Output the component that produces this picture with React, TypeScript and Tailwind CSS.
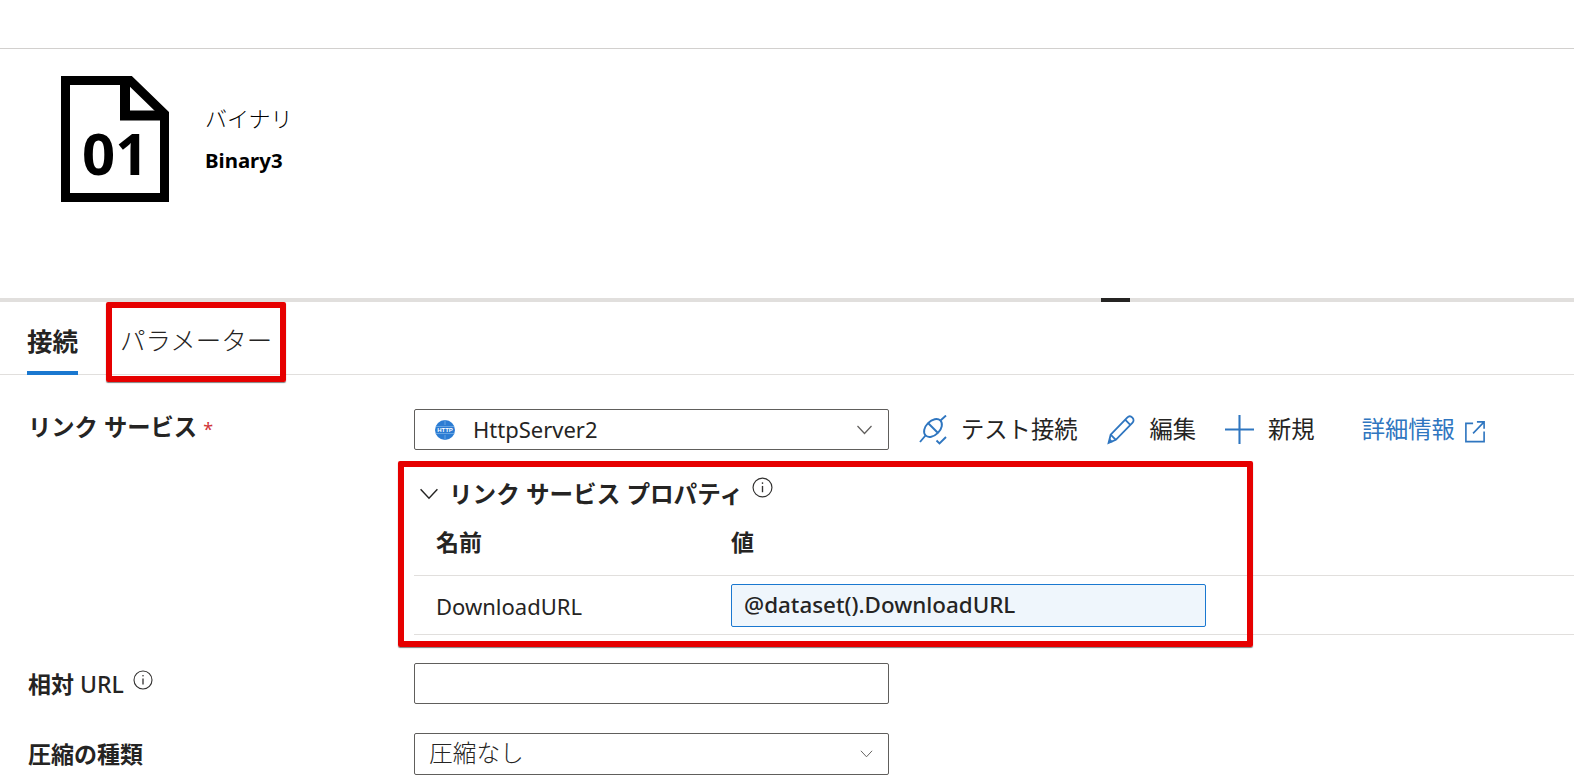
const font = "font-['Noto_Sans','Noto_Sans_CJK_JP',sans-serif]";

function Chevron({ className }: { className: string }) {
  return (
    <svg viewBox="0 0 16 10" fill="none" stroke="currentColor" strokeWidth="1.2" className={className}>
      <path d="M1 1l7 7.5L15 1" />
    </svg>
  );
}

function InfoIcon({ className }: { className: string }) {
  return (
    <svg viewBox="0 0 20 20" fill="none" stroke="#323130" strokeWidth="1.1" className={className}>
      <circle cx="10" cy="10" r="9" />
      <path d="M10 8.500v6" strokeWidth="1.3" />
      <circle cx="10" cy="5.800" r="0.8" fill="#323130" stroke="none" />
    </svg>
  );
}

function FileIcon() {
  return (
    <svg viewBox="0 0 108 126" className="w-[108px] h-[126px] shrink-0">
      <path d="M4.500 4.500H69L103.500 38V121.500H4.500Z" fill="none" stroke="#000" strokeWidth="9" />
      <path d="M64 5V39.500H104" fill="none" stroke="#000" strokeWidth="10" />
      <text x="21" y="99" fontSize="58" fontWeight="700" fill="#000" fontFamily="'Open Sans',sans-serif">01</text>
    </svg>
  );
}

function HttpIcon() {
  return (
    <svg viewBox="0 0 20 20" className="w-5 h-5 shrink-0">
      <circle cx="10" cy="10" r="10" fill="#2b7cd3" />
      <path d="M1 6.500h18M1 13.500h18M10 0v5M10 15v5" stroke="#8fc0ee" strokeWidth="0.6" />
      <text x="10" y="12" textAnchor="middle" fontSize="6" fontWeight="700" fill="#fff" fontFamily="'Liberation Sans',sans-serif">HTTP</text>
    </svg>
  );
}

function PlugIcon() {
  return (
    <svg viewBox="0 0 30 30" fill="none" stroke="#2f76c0" strokeWidth="1.900" className="w-[30px] h-[30px] shrink-0">
      <ellipse cx="15" cy="13" rx="10.500" ry="7" transform="rotate(-45 15 13)" />
      <path d="M10 8l10 10" />
      <path d="M2 27l5.500-6.500M22.500 5.500L28 0.500" />
      <path d="M18.500 25.500l3 3 6.500-6.500" />
    </svg>
  );
}

function PencilIcon() {
  return (
    <svg viewBox="0 0 28 30" fill="none" stroke="#2f76c0" strokeWidth="1.800" className="w-[30px] h-[31px] shrink-0">
      <path d="M2 28l2-8L20 3.500c1.500-1.500 3.500-1.500 5 0s1.500 3.500 0 5L9 25z" />
      <path d="M4 20l5 5M18 5.500l5 5" />
      <path d="M2 28l1-4.500 3.500 3.500z" fill="#2f76c0" stroke="none" />
    </svg>
  );
}

function ExternalIcon() {
  return (
    <svg viewBox="0 0 22 24" fill="none" stroke="#2f76c0" strokeWidth="1.700" className="w-[22px] h-[23px] shrink-0">
      <path d="M9 3.500H1.500v19h19V12" />
      <path d="M9 14L20 2.500M13 2h7.500v7" />
    </svg>
  );
}

export default function App() {
  return (
    <div className={`${font} relative w-[1574px] h-[778px] overflow-hidden bg-white text-[#252423]`}>
      <div className="h-[49px] border-b border-[#d2d0ce]" />

      {/* dataset header */}
      <div className="h-[249px] flex items-start pl-[61px] pt-[27px] gap-[36px]">
        <FileIcon />
        <div className="pt-[27px]">
          <div className="text-[22px] leading-[30px] font-light text-black">バイナリ</div>
          <div className="mt-[14px] text-[20.400px] leading-[26px] font-bold text-black">Binary3</div>
        </div>
      </div>

      {/* splitter */}
      <div className="relative h-[4px] bg-[#e1dfdd]">
        <div className="absolute left-[1101px] top-0 w-[29px] h-[4px] bg-[#252423]" />
      </div>

      {/* tabs */}
      <div className="h-[73px] border-b border-[#e1dfdd] flex items-end pl-[27px] gap-[42px]">
        <div className="h-[72px] flex flex-col justify-end">
          <div className="text-[25.500px] leading-[32px] font-bold pb-[14px]">接続</div>
          <div className="h-[4px] bg-[#1a78d0] -mb-px" />
        </div>
        <div className="h-[72px] flex flex-col justify-end">
          <div className="text-[25.500px] leading-[32px] font-light pb-[18px]">パラメーター</div>
        </div>
      </div>

      {/* linked service */}
      <div className="flex pt-[34px] h-[92px]">
        <div className="w-[414px] pl-[28px] text-[23.300px] leading-[36px] font-bold">
          リンク サービス <span className="text-[#d13438] font-normal text-[18px]">*</span>
        </div>
        <div className="w-[475px] h-[41px] border border-[#605e5c] rounded-[2px] flex items-center pl-[20px] pr-[15px]">
          <HttpIcon />
          <span className="ml-[18px] text-[22px]">HttpServer2</span>
          <Chevron className="ml-auto w-[17px] h-[10px] text-[#605e5c]" />
        </div>
        <div className="flex items-center h-[41px] ml-[29px] text-[23.300px]">
          <PlugIcon />
          <span className="ml-[13px]">テスト接続</span>
          <span className="ml-[29px]"><PencilIcon /></span>
          <span className="ml-[13px]">編集</span>
          <svg viewBox="0 0 28 28" stroke="#2f76c0" strokeWidth="2" className="ml-[29px] w-[29px] h-[29px] shrink-0">
            <path d="M14 0v28M0 14h28" />
          </svg>
          <span className="ml-[14px]">新規</span>
          <span className="ml-[47px] text-[#2f76c0]">詳細情報</span>
          <span className="ml-[9px] mt-[4px]"><ExternalIcon /></span>
        </div>
      </div>

      {/* linked service properties */}
      <div className="ml-[414px]">
        <div className="h-[53px] flex items-center pl-[4px]">
          <Chevron className="w-[22px] h-[12px] text-[#252423]" />
          <span className="ml-[9px] text-[23.600px] font-bold leading-[30px]">リンク サービス プロパティ</span>
          <InfoIcon className="ml-[9px] -mt-[12px] w-[21px] h-[21px]" />
        </div>
        <div className="h-[56px] flex items-center border-b border-[#e1dfdd] text-[23px] font-bold pb-[10px]">
          <div className="w-[317px] pl-[22px]">名前</div>
          <div>値</div>
        </div>
        <div className="h-[59px] flex items-center border-b border-[#e1dfdd]">
          <div className="w-[317px] pl-[22px] text-[22px] pt-[2px]">DownloadURL</div>
          <div className="w-[475px] h-[43px] border border-[#1a78d0] rounded-[2px] bg-[#eff6fc] flex items-center pl-[12px] text-[22.400px] font-medium">
            @dataset().DownloadURL
          </div>
        </div>
      </div>

      {/* relative URL */}
      <div className="flex h-[70px] pt-[28px] box-border">
        <div className="w-[414px] pl-[28px] flex items-start h-[41px] text-[23px] font-bold">
          <span className="leading-[42px]">相対 <span className="font-medium">URL</span></span>
          <InfoIcon className="ml-[9px] mt-[7px] w-[20px] h-[20px]" />
        </div>
        <div className="w-[475px] h-[41px] border border-[#605e5c] rounded-[2px]" />
      </div>

      {/* compression */}
      <div className="flex pt-[28px]">
        <div className="w-[414px] pl-[28px] text-[23px] leading-[42px] font-bold">圧縮の種類</div>
        <div className="w-[475px] h-[42px] border border-[#605e5c] rounded-[2px] flex items-center pl-[14px] pr-[15px] text-[23.700px] font-light">
          圧縮なし
          <Chevron className="ml-auto w-[13px] h-[8px] text-[#605e5c]" />
        </div>
      </div>

      {/* red annotation boxes */}
      <div className="absolute left-[106px] top-[302px] w-[180px] h-[80px] border-[6px] border-[#e60000] rounded-[2px] shadow-[0_1px_1px_rgba(0,0,0,0.5)]" />
      <div className="absolute left-[398px] top-[461px] w-[855px] h-[186px] border-[6px] border-[#e60000] rounded-[2px] shadow-[0_1px_1px_rgba(0,0,0,0.5)]" />
    </div>
  );
}
